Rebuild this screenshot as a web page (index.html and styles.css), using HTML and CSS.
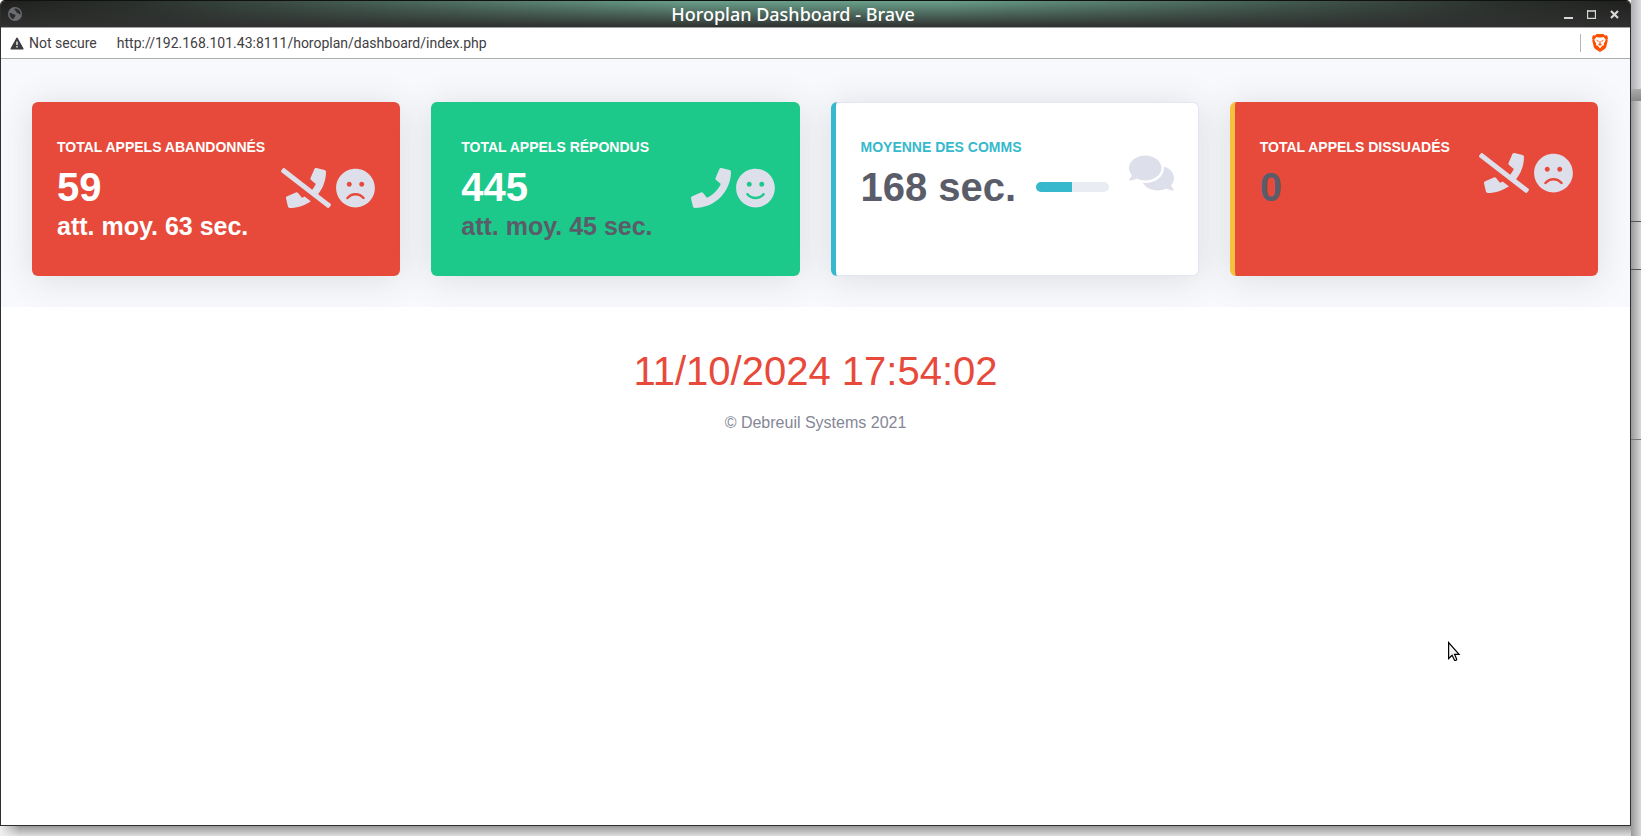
FILE: index.html
```html
<!DOCTYPE html>
<html lang="fr">
<head>
    <meta charset="UTF-8">
    <meta name="viewport" content="width=device-width, initial-scale=1.0">
    <title>Horoplan Dashboard</title>
    <link rel="stylesheet" href="styles.css">
</head>
<body>
    <!-- icons -->
    <svg class="sprite" aria-hidden="true">
        <symbol id="phone" viewBox="0 0 512 512"><path d="M493.4 24.6l-104-24c-11.3-2.6-22.9 3.3-27.5 13.9l-48 112c-4.2 9.8-1.4 21.3 6.9 28l60.6 49.6c-36 76.7-98.9 140.5-177.2 177.2l-49.6-60.6c-6.8-8.3-18.2-11.1-28-6.9l-112 48C3.9 366.5-2 378.1.6 389.4l24 104C27.1 504.2 36.7 512 48 512c256.1 0 464-207.5 464-464 0-11.2-7.7-20.9-18.6-23.4z"/></symbol>
        <symbol id="phone-slash" viewBox="0 0 640 512"><path d="M268.2 381.4l-49.6-60.6c-6.8-8.3-18.2-11.1-28-6.9l-112 48c-10.7 4.6-16.5 16.1-13.9 27.5l24 104c2.5 10.8 12.1 18.6 23.4 18.6 100.7 0 193.7-32.4 269.7-86.9l-80-61.8c-10.9 6.5-22.1 12.7-33.6 18.1zm365.6 76.7L475.1 335.5C537.9 256.4 576 156.9 576 48c0-11.2-7.7-20.9-18.6-23.4l-104-24c-11.3-2.6-22.9 3.3-27.5 13.9l-48 112c-4.2 9.8-1.4 21.3 6.9 28l60.6 49.6c-12.2 26.1-27.9 50.3-46 72.8L45.5 3.4C38.5-2 28.5-.8 23 6.2L3.4 31.4c-5.4 7-4.2 17 2.8 22.4L594.5 508.6c7 5.4 17 4.2 22.5-2.8l19.6-25.3c5.4-6.8 4.1-16.9-2.8-22.4z"/></symbol>
        <symbol id="frown" viewBox="0 0 496 512"><path d="M248 8C111 8 0 119 0 256s111 248 248 248 248-111 248-248S385 8 248 8zm80 168c17.7 0 32 14.3 32 32s-14.3 32-32 32-32-14.3-32-32 14.3-32 32-32zm-160 0c17.7 0 32 14.3 32 32s-14.3 32-32 32-32-14.3-32-32 14.3-32 32-32zm170.2 218.2C315.8 367.4 282.9 352 248 352s-67.8 15.4-90.2 42.2c-13.5 16.3-38.1-4.2-24.6-20.5C161.7 339.6 203.6 320 248 320s86.3 19.6 114.7 53.8c13.6 16.2-11 36.7-24.5 20.4z"/></symbol>
        <symbol id="smile" viewBox="0 0 496 512"><path d="M248 8C111 8 0 119 0 256s111 248 248 248 248-111 248-248S385 8 248 8zm80 168c17.7 0 32 14.3 32 32s-14.3 32-32 32-32-14.3-32-32 14.3-32 32-32zm-160 0c17.7 0 32 14.3 32 32s-14.3 32-32 32-32-14.3-32-32 14.3-32 32-32zm194.8 170.2C334.3 380.4 292.5 400 248 400s-86.3-19.6-114.8-53.8c-13.6-16.3 11-36.7 24.6-20.5 22.4 26.9 55.2 42.2 90.2 42.2s67.8-15.4 90.2-42.2c13.4-16.2 38.1 4.2 24.6 20.5z"/></symbol>
        <symbol id="comments" viewBox="0 0 576 512"><path d="M416 192c0-88.4-93.1-160-208-160S0 103.6 0 192c0 34.3 14.1 65.9 38 92-13.4 30.2-35.5 54.2-35.8 54.5-2.2 2.3-2.8 5.7-1.5 8.7S4.8 352 8 352c36.6 0 66.9-12.3 88.7-25 32.2 15.7 70.3 25 111.3 25 114.9 0 208-71.6 208-160zm122 220c23.9-26 38-57.7 38-92 0-66.9-53.5-124.2-129.3-148.1.9 6.6 1.3 13.3 1.3 20.1 0 105.9-107.7 192-240 192-10.8 0-21.3-.8-31.7-1.9C207.8 439.6 281.8 480 368 480c41 0 79.1-9.2 111.3-25 21.8 12.7 52.1 25 88.7 25 3.2 0 6.1-1.9 7.3-4.8 1.3-2.9.7-6.3-1.5-8.7-.3-.3-22.4-24.2-35.8-54.5z"/></symbol>
    </svg>

    <div class="window">
        <header class="titlebar">
            <svg class="globe" width="14" height="14" viewBox="0 0 14 14" aria-hidden="true">
                <circle cx="7" cy="7" r="7" fill="#6a6c71"/>
                <path d="M1.500 6c2 0 2.500.5 3.500 1s2.500 0 2.500 1.500-1.500 1.500-2 3.500C3.500 12 1.500 9.500 1.500 6zM7 1.500c-1 1-.5 2 .5 2.200S8 5.500 9.500 6s1.500 1.500 3 1.500C13 4 10.500 1.500 7 1.500z" fill="#2b2c2c"/>
            </svg>
            <div class="window-title">Horoplan Dashboard - Brave</div>
            <div class="window-buttons">
                <button type="button" aria-label="Minimize"><svg width="9" height="9" viewBox="0 0 9 9"><path d="M0 8h9" stroke="#d8d8d8" stroke-width="2"/></svg></button>
                <button type="button" aria-label="Maximize"><svg width="9" height="9" viewBox="0 0 9 9"><path d="M0 1h9M.5 0v9M8.500 0v9M0 8.500h9" stroke="#d8d8d8" stroke-width="1.300" fill="none"/></svg></button>
                <button type="button" aria-label="Close"><svg width="9" height="9" viewBox="0 0 9 9"><path d="M1 1l7 7M8 1l-7 7" stroke="#d8d8d8" stroke-width="2.200"/></svg></button>
            </div>
        </header>

        <div class="addressbar">
            <svg width="14" height="13" viewBox="0 0 14 13" aria-hidden="true">
                <path d="M7 1.300L12.800 11.800H1.200z" fill="#3c3d40" stroke="#3c3d40" stroke-width="1.600" stroke-linejoin="round"/>
                <path d="M7 4.500v3.500M7 9v1.500" stroke="#fff" stroke-width="1.300"/>
            </svg>
            <span class="secure">Not secure</span>
            <span class="url">http://192.168.101.43:8111/horoplan/dashboard/index.php</span>
            <button type="button" class="brave" aria-label="Brave Shields">
                <svg width="16" height="18" viewBox="0 0 16 18">
                    <path d="M4.500 0h7l1.500 1.500 2-.2 1 2.700-.6 1.500.3 1.200-1.500 6.300-1.300 2L8 18l-4.900-3-1.300-2L.3 6.700l.3-1.200L0 4l1-2.700 2 .2z" fill="#ff4f00"/>
                    <path d="M4.500 3l2 .5h3l2-.5 2.200 2.500-.7 2-1.200 2 .2 1.500-2 1L8 14.500 6 12l-2-1 .2-1.500-1.200-2-.7-2z" fill="#fff"/>
                    <path d="M4 5.800l2.700.9-.4 1.300zM12 5.800l-2.700.9.4 1.300zM7.500 7h1v2.500l1.500 1-2 1.200-2-1.200 1.500-1z" fill="#ff4f00"/>
                </svg>
            </button>
        </div>

        <main class="cards">
            <section class="card card-danger">
                <div class="card-row">
                    <div class="card-text">
                        <div class="label">Total appels abandonnés</div>
                        <div class="value">59</div>
                        <div class="wait">att. moy. 63 sec.</div>
                    </div>
                    <div class="icons">
                        <svg width="50" height="40"><use href="#phone-slash"/></svg>
                        <svg width="39" height="40"><use href="#frown"/></svg>
                    </div>
                </div>
            </section>

            <section class="card card-success">
                <div class="card-row">
                    <div class="card-text">
                        <div class="label">Total appels répondus</div>
                        <div class="value">445</div>
                        <div class="wait gray">att. moy. 45 sec.</div>
                    </div>
                    <div class="icons">
                        <svg width="40" height="40"><use href="#phone"/></svg>
                        <svg width="39" height="40"><use href="#smile"/></svg>
                    </div>
                </div>
            </section>

            <section class="card card-info">
                <div class="card-row">
                    <div class="card-text">
                        <div class="label">Moyenne des comms</div>
                        <div class="value-row">
                            <div class="value gray">168 sec.</div>
                            <div class="progress"><div class="progress-bar" style="width: 50%"></div></div>
                        </div>
                    </div>
                    <div class="icons">
                        <svg width="45" height="40"><use href="#comments"/></svg>
                    </div>
                </div>
            </section>

            <section class="card card-warning">
                <div class="card-row">
                    <div class="card-text">
                        <div class="label">Total appels dissuadés</div>
                        <div class="value gray">0</div>
                    </div>
                    <div class="icons">
                        <svg width="50" height="40"><use href="#phone-slash"/></svg>
                        <svg width="39" height="40"><use href="#frown"/></svg>
                    </div>
                </div>
            </section>
        </main>

        <footer class="footer">
            <div class="clock">11/10/2024 17:54:02</div>
            <div class="copyright">© Debreuil Systems 2021</div>
        </footer>
    </div>

    <!-- mouse pointer -->
    <svg class="pointer" width="14" height="21" viewBox="0 0 14 21" aria-hidden="true">
        <path d="M.6 1.500v16l3.500-3.300 2.300 4.800c.5 1 2.600.2 2.200-1L6.600 13.300h4.500z" fill="#f4f4f4" stroke="#000" stroke-width="1.200"/>
    </svg>
</body>
</html>
```

FILE: styles.css
```css
*{
    box-sizing: border-box;
}
body{
    margin: 0;
    min-height: 100vh;
    display: flex;
    padding: 0 10px 10px 0;
    font-family: "Liberation Sans", Arial, sans-serif;
    /* what shows of the windows behind */
    background:
        linear-gradient(#555, #555) right 221px / 10px 1px no-repeat,
        linear-gradient(#555, #555) right 269px / 10px 1px no-repeat,
        linear-gradient(#777, #777) right 439px / 10px 1px no-repeat,
        linear-gradient(#aaa, #888) right 89px / 10px 12px no-repeat,
        linear-gradient(to right, #b0b0b4, #dcdce0) right top / 10px 89px no-repeat,
        linear-gradient(to right, #999, #d8d8d8) right top / 10px 100% no-repeat,
        linear-gradient(to right, #f0f0f0, rgba(240, 240, 240, 0)) left bottom / 20px 10px no-repeat,
        linear-gradient(#999, #ddd) left bottom / 100% 10px no-repeat;
}
button{
    display: flex;
    padding: 0;
    border: 0;
    background: none;
}
.sprite{
    position: absolute;
    width: 0;
    height: 0;
}
.window{
    flex: 1;
    display: flex;
    flex-direction: column;
    border: 1px solid #2d2f30;
    border-top-color: #111;
    border-radius: 5px 5px 0 0;
    background: #fff;
    overflow: hidden;
}

/* browser */
.titlebar{
    display: flex;
    align-items: center;
    height: 27px;
    padding: 0 11px 0 7px;
    border-bottom: 1px solid #a0a0a0;
    background:
        linear-gradient(rgba(45, 45, 45, 0), #2f302f),
        linear-gradient(to right, #1f201e, #2a302c 8%, #6aa08b 42%, #6aa08b 58%, #2a302c 92%, #1f201e);
}
.window-title{
    flex: 1;
    text-align: center;
    color: #fff;
    font: 500 18px/26px "Noto Sans", sans-serif;
}
.window-buttons{
    display: flex;
    gap: 14px;
}
.addressbar{
    display: flex;
    align-items: center;
    height: 31px;
    padding: 0 22px 0 9px;
    border-bottom: 1px solid #adadad;
    color: #3f4043;
    font: 14px/20px Roboto, sans-serif;
}
.secure{
    margin: 0 20px 0 5px;
}
.brave{
    margin-left: auto;
    padding-left: 11px;
    border-left: 1px solid #b5b5b5;
}

/* cards */
.cards{
    display: grid;
    grid-template-columns: repeat(4, 1fr);
    gap: 31px;
    padding: 43px 32px 31px 31px;
    background: #f8f9fc;
}
.card{
    padding: 34px 25px 35px;
    border-radius: 6px;
    box-shadow: 0 3px 35px rgba(58, 59, 69, 0.15);
    color: #fff;
}
.card-danger{
    background: #e74a3b;
}
.card-success{
    background: #1cc88a;
    border-left: 5px solid #1cc88a;
}
.card-info{
    background: #fff;
    border-left: 5px solid #36b9cc;
    box-shadow: inset -1px 0 #e3e6f0, inset 0 1px #e3e6f0, inset 0 -1px #e3e6f0, 0 3px 35px rgba(58, 59, 69, 0.15);
}
.card-warning{
    background: #e74a3b;
    border-left: 5px solid #f6c23e;
}
.card-row{
    display: flex;
    align-items: center;
}
.card-text{
    flex: 1;
    font-weight: 700;
}
.label{
    margin-bottom: 5px;
    font-size: 14px;
    line-height: 22px;
    text-transform: uppercase;
    white-space: nowrap;
}
.card-info .label{
    color: #36b9cc;
}
.value{
    font-size: 40px;
    line-height: 48px;
    white-space: nowrap;
}
.wait{
    font-size: 25px;
    line-height: 30px;
    white-space: nowrap;
}
.gray{
    color: #5a5c69;
}
.value-row{
    display: flex;
    align-items: center;
}
.progress{
    flex: 1;
    height: 10px;
    margin: 0 20px;
    border-radius: 6px;
    background: #eaecf4;
    overflow: hidden;
}
.progress-bar{
    height: 100%;
    background: #36b9cc;
}
.icons{
    display: flex;
    gap: 5px;
    padding-bottom: 2px;
    fill: #dddfeb;
}

/* footer */
.footer{
    padding-top: 40px;
    text-align: center;
}
.clock{
    color: #e74a3b;
    font-size: 40px;
    line-height: 48px;
}
.copyright{
    margin-top: 18px;
    color: #858796;
    font-size: 16px;
    line-height: 20px;
}
.pointer{
    position: absolute;
    left: 1448px;
    top: 641px;
}
```
